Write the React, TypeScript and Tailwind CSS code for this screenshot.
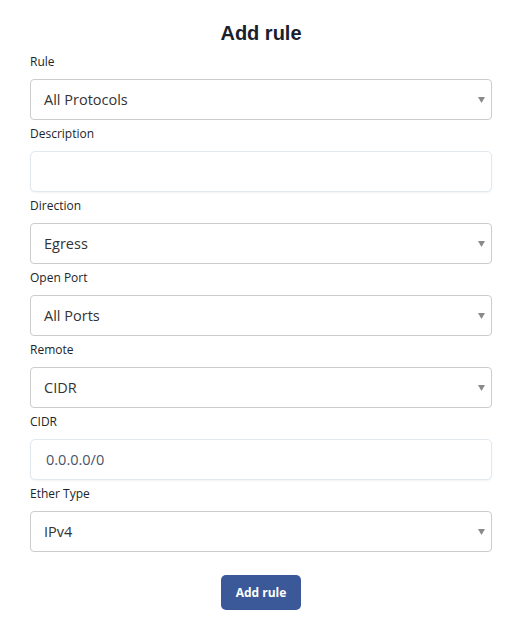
import React from 'react';

type Field = { label: string; kind: 'select' | 'input'; value: string };

const fields: Field[] = [
  { label: 'Rule', kind: 'select', value: 'All Protocols' },
  { label: 'Description', kind: 'input', value: '' },
  { label: 'Direction', kind: 'select', value: 'Egress' },
  { label: 'Open Port', kind: 'select', value: 'All Ports' },
  { label: 'Remote', kind: 'select', value: 'CIDR' },
  { label: 'CIDR', kind: 'input', value: '0.0.0.0/0' },
  { label: 'Ether Type', kind: 'select', value: 'IPv4' },
];

const SelectBox = ({ value }: { value: string }) => (
  <div className="h-[41px] flex items-center justify-between border border-[#cccccc] rounded-[4px] bg-white pl-[13px] pr-[6px]">
    <span className="text-[14.5px] text-[#333333]">{value}</span>
    <svg width="7" height="6" viewBox="0 0 7 6" className="mt-[1px]">
      <path d="M0 0 H7 L3.5 6 Z" fill="#8a8a8a" />
    </svg>
  </div>
);

const InputBox = ({ value }: { value: string }) => (
  <div className="h-[41px] flex items-center border border-[#e2e8f0] rounded-[5px] bg-white pl-[15px] shadow-[0_1px_2px_rgba(0,0,0,0.05)]">
    <span className="text-[14.5px] text-[#4a5568]">{value}</span>
  </div>
);

export default function App() {
  return (
    <div className="w-[518px] h-[621px] bg-white pl-[30px] pr-[26px] pt-[20px] font-['Open_Sans',sans-serif]">
      <h1 className="text-center text-[20px] font-bold leading-[26px] mb-[2px] text-[#1a202c] font-['Liberation_Sans',Arial,sans-serif]">
        Add rule
      </h1>
      <div className="flex flex-col">
        {fields.map((f) => (
          <div key={f.label} className="flex flex-col">
            <label className="text-[12px] font-medium text-[#212529] leading-[18px] mt-[5px] mb-[8px]">
              {f.label}
            </label>
            {f.kind === 'select' ? <SelectBox value={f.value} /> : <InputBox value={f.value} />}
          </div>
        ))}
      </div>
      <div className="flex justify-center mt-[23px]">
        <button className="w-[80px] h-[35px] rounded-[5px] bg-[#3b5998] text-white text-[12px] font-bold">
          Add rule
        </button>
      </div>
    </div>
  );
}
